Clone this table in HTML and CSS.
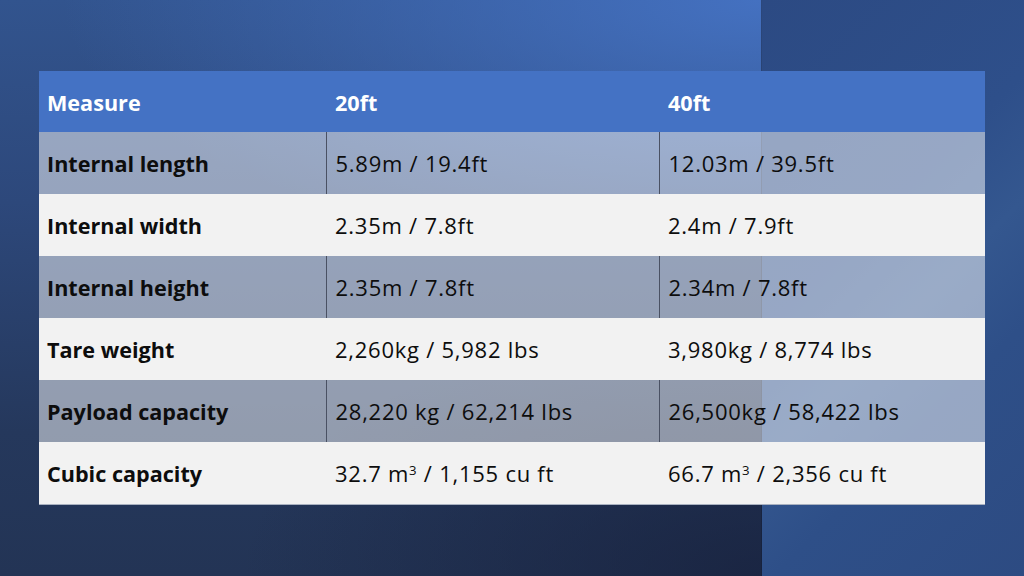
FILE: index.html
```html
<!DOCTYPE html>
<html lang="en">
<head>
<meta charset="utf-8">
<title>Container dimensions</title>
<link rel="stylesheet" href="styles.css">
</head>
<body>
<main class="slide">
  <table class="specs">
    <colgroup>
      <col class="c1"><col class="c2"><col class="c3">
    </colgroup>
    <thead>
      <tr><th>Measure</th><th>20ft</th><th>40ft</th></tr>
    </thead>
    <tbody>
      <tr class="shade"><th>Internal length</th><td>5.89m / 19.4ft</td><td>12.03m / 39.5ft</td></tr>
      <tr class="light"><th>Internal width</th><td>2.35m / 7.8ft</td><td>2.4m / 7.9ft</td></tr>
      <tr class="shade"><th>Internal height</th><td>2.35m / 7.8ft</td><td>2.34m / 7.8ft</td></tr>
      <tr class="light"><th>Tare weight</th><td>2,260kg / 5,982 lbs</td><td>3,980kg / 8,774 lbs</td></tr>
      <tr class="shade"><th>Payload capacity</th><td>28,220 kg / 62,214 lbs</td><td>26,500kg / 58,422 lbs</td></tr>
      <tr class="light"><th>Cubic capacity</th><td>32.7 m<sup>3</sup> / 1,155 cu ft</td><td>66.7 m<sup>3</sup> / 2,356 cu ft</td></tr>
    </tbody>
  </table>
</main>
</body>
</html>
```
FILE: styles.css
```css
html, body {
  margin: 0;
  padding: 0;
}
body {
  width: 1024px;
  height: 576px;
  overflow: hidden;
  font-family: "Open Sans", Lato, sans-serif;
}
.slide {
  box-sizing: border-box;
  width: 1024px;
  height: 576px;
  padding: 71px 39px;
  background:
    linear-gradient(135deg, #2c4a83 0%, #2e4f8a 40%, #34578f 55%, #2e4f88 70%, #2d4b82 100%) right top / 262px 100% no-repeat,
    linear-gradient(90deg, transparent 761px, rgba(20,30,55,0.5) 761px, rgba(20,30,55,0.5) 762px, transparent 762px),
    radial-gradient(ellipse 700px 260px at 762px 0px, rgba(70,116,198,0.9), rgba(70,116,198,0) 100%),
    radial-gradient(ellipse 520px 260px at 762px 576px, rgba(24,34,62,0.8), rgba(24,34,62,0) 100%),
    linear-gradient(180deg, #32548e 0%, #2d487b 35%, #25385c 75%, #233455 100%);
}
.specs {
  width: 946px;
  border-collapse: collapse;
  border-spacing: 0;
  table-layout: fixed;
  font-size: 22px;
  color: #0d0d0d;
  box-shadow: 0 1px 0 #a9b1c0;
}
.c1 { width: 287px; }
.c2 { width: 333px; }
.c3 { width: 326px; }
.specs tr {
  height: 62px;
}
.specs thead tr {
  height: 61px;
}
.specs th,
.specs td {
  padding: 1px 8px 0 9px;
  text-align: left;
  vertical-align: middle;
  white-space: nowrap;
  line-height: 1.2;
}
.specs th {
  font-size: 21.6px;
}
.specs tbody th {
  padding-left: 8px;
  font-weight: 700;
}
.specs td {
  font-weight: 400;
  letter-spacing: 0.75px;
}
.specs thead th {
  background: #4472c4;
  color: #ffffff;
  font-weight: 700;
  padding-top: 2px;
}
.specs thead th:first-child {
  padding-left: 8px;
}
.shade th,
.shade td {
  background: rgba(255, 255, 255, 0.5);
}
.shade td {
  border-left: 1px solid #4a5163;
}
.light th,
.light td {
  background: #f2f2f2;
}
sup {
  font-size: 0.6em;
  line-height: 0;
  vertical-align: 0.55em;
}
```
